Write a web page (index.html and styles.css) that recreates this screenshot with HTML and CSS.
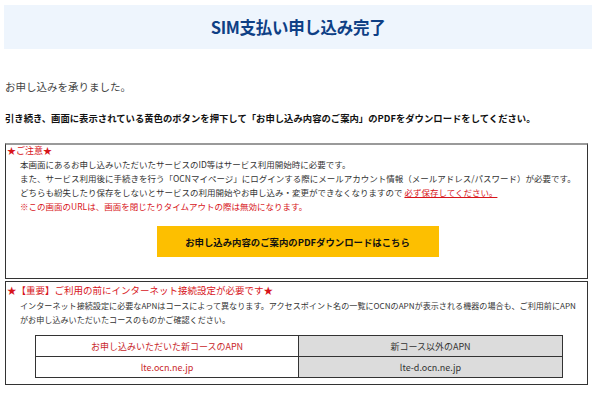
FILE: index.html
```html
<!DOCTYPE html>
<html lang="ja">
<head>
    <meta charset="UTF-8">
    <title>SIM支払い申し込み完了</title>
    <link rel="stylesheet" href="styles.css">
</head>
<body>

<div class="page-title">
    <h1>SIM支払い申し込み完了</h1>
</div>

<p class="thanks">お申し込みを承りました。</p>
<p class="lead">引き続き、画面に表示されている黄色のボタンを押下して「お申し込み内容のご案内」のPDFをダウンロードをしてください。</p>

<div class="notice">
    <div class="notice-title">★ご注意★</div>
    <p class="notice-body">
        本画面にあるお申し込みいただいたサービスのID等はサービス利用開始時に必要です。<br>
        また、サービス利用後に手続きを行う「OCNマイページ」にログインする際にメールアカウント情報（メールアドレス/パスワード）が必要です。<br>
        どちらも紛失したり保存をしないとサービスの利用開始やお申し込み・変更ができなくなりますので <span class="must">必ず保存してください。</span><br>
        <span class="red">※この画面のURLは、画面を閉じたりタイムアウトの際は無効になります。</span>
    </p>
    <div class="btn-row">
        <a href="#" class="pdf-btn">お申し込み内容のご案内のPDFダウンロードはこちら</a>
    </div>
</div>

<div class="notice notice-apn">
    <div class="notice-title">★【重要】ご利用の前にインターネット接続設定が必要です★</div>
    <p class="notice-body">
        インターネット接続設定に必要なAPNはコースによって異なります。アクセスポイント名の一覧にOCNのAPNが表示される機器の場合も、ご利用前にAPN<br>
        がお申し込みいただいたコースのものかご確認ください。
    </p>
    <table class="apn-table">
        <tr>
            <td class="new">お申し込みいただいた新コースのAPN</td>
            <td class="old">新コース以外のAPN</td>
        </tr>
        <tr>
            <td class="new">lte.ocn.ne.jp</td>
            <td class="old">lte-d.ocn.ne.jp</td>
        </tr>
    </table>
</div>

</body>
</html>
```

FILE: styles.css
```css
body {
    margin: 0;
    padding: 5px 0 0 0;
    font-family: "Noto Sans CJK JP", "Noto Sans", sans-serif;
    color: #333;
    background-color: white;
}
.page-title {
    margin: 0 8px 0 4px;
    height: 44px;
    background-color: #eef5fd;
    display: flex;
    align-items: center;
    justify-content: center;
}
.page-title h1 {
    margin: 0;
    font-size: 16.5px;
    font-weight: bold;
    color: #0e3f85;
    letter-spacing: -0.3px;
}
.thanks {
    margin: 31px 0 0 5px;
    font-size: 10.5px;
    line-height: 14px;
    color: #444;
}
.lead {
    margin: 17px 0 0 5px;
    font-size: 9.35px;
    line-height: 14px;
    font-weight: bold;
    color: #111;
    white-space: nowrap;
}
.notice {
    margin: 18px 12px 0 5px;
    border: 1px solid #333;
    border-top: 2px solid #9a9a9a;
    padding-bottom: 21px;
}
.notice-title {
    padding-left: 1px;
    font-size: 9px;
    line-height: 12px;
    color: #d7141a;
}
.notice-body {
    margin: 0;
    padding-left: 14px;
    font-size: 8.5px;
    line-height: 14px;
    color: #333;
    white-space: nowrap;
}
.red {
    color: #d7141a;
}
.must {
    color: #d7141a;
    text-decoration: underline;
}
.btn-row {
    margin-top: 13px;
    display: flex;
    justify-content: center;
    padding-left: 2px;
}
.pdf-btn {
    width: 282px;
    height: 31px;
    background-color: #fdbf00;
    color: #111;
    font-size: 9.4px;
    font-weight: bold;
    text-decoration: none;
    display: flex;
    align-items: center;
    justify-content: center;
}
.notice-apn {
    margin-top: 2px;
    border-top: 1px solid #333;
    padding-top: 1px;
    padding-bottom: 6px;
}
.notice-apn .notice-title {
    font-size: 9.5px;
    line-height: 14px;
}
.notice-apn .notice-body {
    margin-top: 2px;
    font-size: 8.1px;
}
.apn-table {
    margin: 8px 0 0 29px;
    width: 528px;
    border-collapse: collapse;
}
.apn-table td {
    border: 1px solid #333;
    height: 20px;
    padding: 0;
    text-align: center;
    font-size: 9px;
}
.apn-table td.new {
    width: 262px;
    color: #c8272b;
    background-color: white;
}
.apn-table td.old {
    background-color: #dcdcdc;
    color: #333;
}
```
